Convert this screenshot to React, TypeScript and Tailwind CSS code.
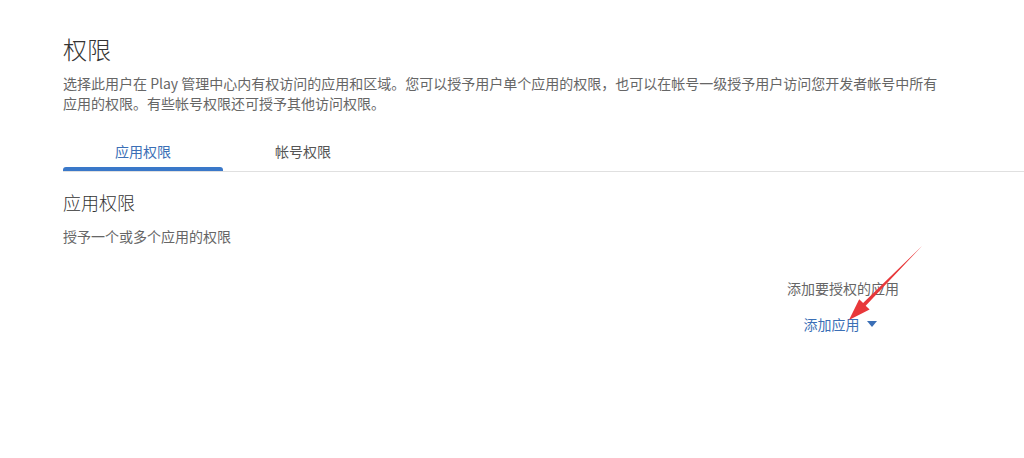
import React, { useState } from "react";

const tabs = ["应用权限", "帐号权限"];

export default function App() {
  const [active, setActive] = useState(0);

  return (
    <div className="relative w-[1024px] h-[458px] bg-white overflow-hidden font-['Microsoft_YaHei','Noto_Sans_CJK_SC',sans-serif]">
      <div className="pl-[63px] pt-[33px]">
        {/* Header */}
        <h1 className="text-[24px] leading-[32px] font-light text-[#333333]">权限</h1>
        <p className="mt-[8px] w-[888px] text-[14px] leading-[20px] text-[#666666]">
          选择此用户在 Play 管理中心内有权访问的应用和区域。您可以授予用户单个应用的权限，也可以在帐号一级授予用户访问您开发者帐号中所有应用的权限。有些帐号权限还可授予其他访问权限。
        </p>

        {/* Tabs */}
        <div className="mt-[18px] flex border-b border-[#e0e0e0]">
          {tabs.map((t, i) => (
            <button
              key={t}
              onClick={() => setActive(i)}
              className={
                "relative w-[160px] h-[40px] flex items-center justify-center text-[14px] " +
                (active === i ? "text-[#3b6fb6]" : "text-[#555555]")
              }
            >
              {t}
              {active === i && (
                <span className="absolute left-0 bottom-0 w-full h-[4px] rounded-t-[3px] bg-[#3a78c9]" />
              )}
            </button>
          ))}
        </div>

        {/* Section */}
        <h2 className="mt-[18px] text-[18px] leading-[24px] font-light text-[#333333]">应用权限</h2>
        <p className="mt-[12px] text-[14px] leading-[20px] text-[#666666]">授予一个或多个应用的权限</p>

        <div className="flex justify-end pr-[125px]">
          <div className="mt-[32px] flex flex-col items-center">
            <span className="text-[14px] leading-[20px] text-[#666666]">添加要授权的应用</span>
            <button className="mt-[16px] mr-[6px] flex items-center gap-[7px] text-[14px] leading-[20px] text-[#3b6fb6]">
              添加应用
              <svg width="10" height="6" viewBox="0 0 10 6">
                <path d="M0 0h10L5 6z" fill="#3b6fb6" />
              </svg>
            </button>
          </div>
        </div>
      </div>

      {/* red annotation arrow */}
      <svg className="absolute inset-0 pointer-events-none" width="1024" height="458" viewBox="0 0 1024 458">
        <polygon
          points="922,246 865.7,305.7 869.6,309.5 849,320 859.2,299.3 863.1,303.1"
          fill="#e8383a"
        />
      </svg>
    </div>
  );
}
